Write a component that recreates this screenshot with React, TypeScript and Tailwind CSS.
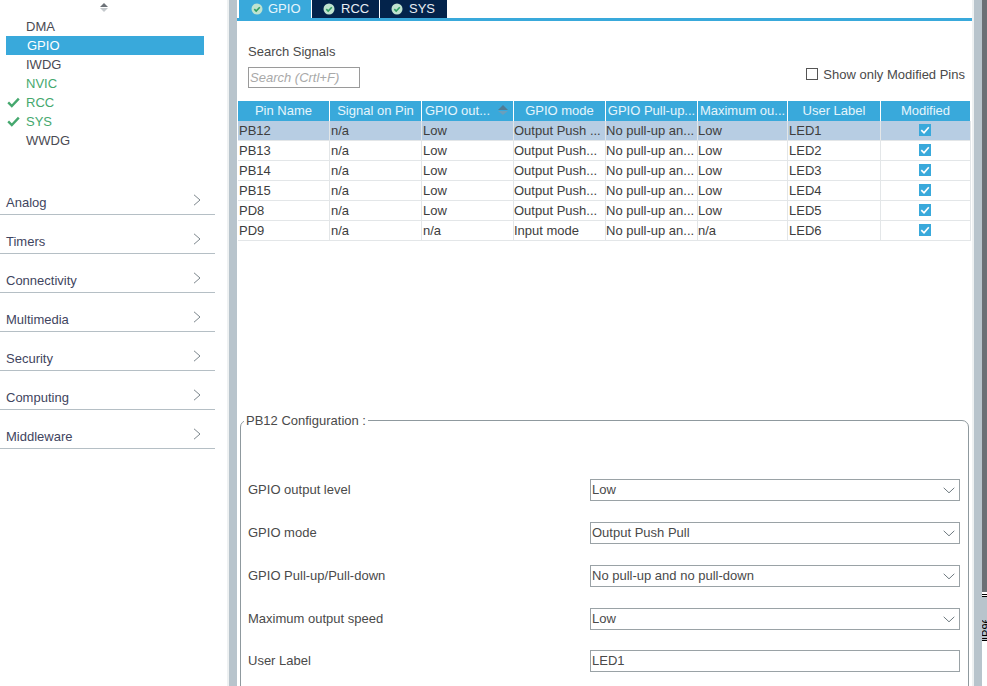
const font = "font-['Liberation_Sans',Arial,sans-serif]";

const gpioItems = [
  { name: "DMA", color: "text-[#4a4a52]" },
  { name: "GPIO", color: "text-white", selected: true },
  { name: "IWDG", color: "text-[#4a4a52]" },
  { name: "NVIC", color: "text-[#45a86e]" },
  { name: "RCC", color: "text-[#45a86e]", checked: true },
  { name: "SYS", color: "text-[#45a86e]", checked: true },
  { name: "WWDG", color: "text-[#4a4a52]" },
];

const categories = ["Analog", "Timers", "Connectivity", "Multimedia", "Security", "Computing", "Middleware"];

const columns = [
  { label: "Pin Name", width: "w-[92px]", pad: "pl-[1px]" },
  { label: "Signal on Pin", width: "w-[92px]", pad: "pl-[1px]" },
  { label: "GPIO out...", width: "w-[92px]", pad: "pl-[1px]", sorted: true },
  { label: "GPIO mode", width: "w-[92px]", pad: "pl-0" },
  { label: "GPIO Pull-up...", width: "w-[92px]", pad: "pl-0" },
  { label: "Maximum ou...", width: "w-[90px]", pad: "pl-0" },
  { label: "User Label", width: "w-[93px]", pad: "pl-[1px]" },
  { label: "Modified", width: "w-[90px]", pad: "pl-0" },
];

const rows = [
  ["PB12", "n/a", "Low", "Output Push ...", "No pull-up an...", "Low", "LED1"],
  ["PB13", "n/a", "Low", "Output Push...", "No pull-up an...", "Low", "LED2"],
  ["PB14", "n/a", "Low", "Output Push...", "No pull-up an...", "Low", "LED3"],
  ["PB15", "n/a", "Low", "Output Push...", "No pull-up an...", "Low", "LED4"],
  ["PD8", "n/a", "Low", "Output Push...", "No pull-up an...", "Low", "LED5"],
  ["PD9", "n/a", "n/a", "Input mode", "No pull-up an...", "n/a", "LED6"],
];

const configFields = [
  { label: "GPIO output level", value: "Low" },
  { label: "GPIO mode", value: "Output Push Pull" },
  { label: "GPIO Pull-up/Pull-down", value: "No pull-up and no pull-down" },
  { label: "Maximum output speed", value: "Low" },
  { label: "User Label", value: "LED1", input: true },
];

function TabIcon() {
  return (
    <svg width="12" height="12" viewBox="0 0 12 12">
      <circle cx="6" cy="6" r="5.5" fill="#bfe3cf" />
      <path d="M3.3 6.1 5.2 8 8.8 4.2" fill="none" stroke="#2f9e63" strokeWidth="1.6" />
    </svg>
  );
}

function Tab({ label, active }: { label: string; active?: boolean }) {
  return (
    <div className={`flex h-[18px] items-center border-r border-white ${active ? "w-[73px] bg-[#39a9db] pl-[12px]" : "w-[68px] bg-[#03234b] pl-[11px]"}`}>
      <TabIcon />
      <span className={`text-[13px] ${active ? "ml-[5px] text-[#e6f5fb]" : "ml-[6px] text-[#e8eef4]"}`}>{label}</span>
    </div>
  );
}

function ModifiedBox() {
  return (
    <svg width="12" height="12" viewBox="0 0 12 12">
      <rect width="12" height="12" fill="#39a9db" />
      <path d="M2.3 6.2 5 8.8 9.8 3.2" fill="none" stroke="#fff" strokeWidth="1.7" />
    </svg>
  );
}

function Chevron() {
  return (
    <svg width="12" height="7" viewBox="0 0 12 7">
      <path d="M.7.8 6 5.8 11.3.8" fill="none" stroke="#6f7a80" strokeWidth="1" />
    </svg>
  );
}

export default function App() {
  return (
    <div className={`flex h-[686px] w-[987px] overflow-hidden bg-white text-[13px] ${font}`}>
      {/* left category tree */}
      <aside className="flex w-[227px] shrink-0 flex-col bg-white">
        <div className="flex h-[17px] w-[208px] flex-col items-center pt-[3px]">
          <span className="h-0 w-0 border-x-[4px] border-b-[4px] border-x-transparent border-b-[#6d7278]" />
          <span className="mt-[1px] h-0 w-0 border-x-[4px] border-t-[4px] border-x-transparent border-t-[#c3c8cc]" />
        </div>
        <ul className="ml-[6px] w-[198px]">
          {gpioItems.map((item) => (
            <li key={item.name} className={`relative flex h-[19px] items-center ${item.selected ? "bg-[#39a9db] pl-[21px]" : "pl-[20px]"} ${item.color}`}>
              {item.checked && (
                <svg className="absolute left-[1px] top-[4px]" width="13" height="11" viewBox="0 0 13 11">
                  <path d="M1.2 5.4 4.8 9 11.8 1.6" fill="none" stroke="#45a86e" strokeWidth="2.4" />
                </svg>
              )}
              {item.name}
            </li>
          ))}
        </ul>
        <div className="mt-[42px]">
          {categories.map((name) => (
            <div key={name} className="mb-[16px] flex h-[23px] w-[215px] items-center justify-between border-b border-[#b5bfc5] pb-[1px] pl-[6px] pr-[14px] text-[#3f4560]">
              <span className="pt-[1px]">{name}</span>
              <svg width="8" height="12" viewBox="0 0 8 12" className="mb-[6px]">
                <path d="M1 .8 7 6 1 11.2" fill="none" stroke="#7c868c" strokeWidth="1" />
              </svg>
            </div>
          ))}
        </div>
      </aside>

      <div className="w-[2px] shrink-0 bg-[#eef1f2]" />
      <div className="w-[8px] shrink-0 bg-[#b8c4cc]" />

      {/* main panel */}
      <main className="flex w-[735px] shrink-0 flex-col bg-white text-[#4a4a4a]">
        <div className="flex border-b-[3px] border-[#39a9db] pl-[2px]">
          <Tab label="GPIO" active />
          <Tab label="RCC" />
          <Tab label="SYS" />
        </div>

        <div className="flex items-end justify-between pl-[11px] pr-[7px] pt-[23px]">
          <div>
            <div className="h-[15px] leading-[15px]">Search Signals</div>
            <div className="mt-[8px] flex h-[21px] w-[112px] items-center border border-[#9a9a9a] pl-[1px] text-[13px] italic text-[#a9a9a9]">
              Search (Crtl+F)
            </div>
          </div>
          <label className="mb-[4px] flex items-center">
            <span className="h-[12px] w-[12px] border border-[#555]" />
            <span className="ml-[5px]">Show only Modified Pins</span>
          </label>
        </div>

        <div className="ml-[1px] mt-[13px] w-[733px]">
          <div className="flex h-[20px]">
            {columns.map((col) => (
              <div key={col.label} className={`relative flex items-center border-r border-white bg-[#39a9db] text-[#e6f5fb] ${col.width} ${col.sorted ? "pl-[3px]" : "justify-center"}`}>
                <span className="whitespace-nowrap">{col.label}</span>
                {col.sorted && (
                  <span className="absolute right-[5px] top-[4px] flex flex-col items-center">
                    <span className="h-0 w-0 border-x-[5px] border-b-[5px] border-x-transparent border-b-[#4f7c96]" />
                    <span className="mt-[1px] h-0 w-0 border-x-[5px] border-t-[4px] border-x-transparent border-t-[#6a9fbc]" />
                  </span>
                )}
              </div>
            ))}
          </div>
          {rows.map((row, i) => (
            <div key={row[0]} className={`flex h-[20px] border-b border-[#e3e6e8] ${i === 0 ? "bg-[#b7cde3]" : "bg-white"}`}>
              {row.map((cell, j) => (
                <div key={j} className={`flex items-center overflow-hidden whitespace-nowrap border-r border-[#e3e6e8] text-[#3d3d3d] ${columns[j].pad} ${columns[j].width}`}>
                  {cell}
                </div>
              ))}
              <div className="flex w-[90px] items-center justify-center border-r border-[#e3e6e8] pb-[2px] pr-[2px]">
                <ModifiedBox />
              </div>
            </div>
          ))}
        </div>

        <fieldset className="ml-[3px] mt-[172px] h-[300px] w-[729px] shrink-0 rounded-[7px] border border-[#8f999e] pl-[7px] pr-[8px] pt-[51px]">
          <legend className="ml-[-4px] px-[2px] leading-[15px] text-[#4a4a4a]">PB12 Configuration :</legend>
          {configFields.map((f) => (
            <div key={f.label} className={`mb-[21px] flex h-[22px] items-center justify-between ${f.input ? "mt-[-1px]" : ""}`}>
              <span>{f.label}</span>
              <div className="flex h-[22px] w-[370px] items-center justify-between border border-[#9aa2a6] pl-[1px] pr-[4px] text-[#4a4a4a]">
                {f.value}
                {!f.input && <Chevron />}
              </div>
            </div>
          ))}
        </fieldset>
      </main>

      <div className="w-[2px] shrink-0 bg-[#eef1f2]" />
      <div className="w-[8px] shrink-0 bg-[#b8c4cc]" />

      {/* edge of the next panel */}
      <div className="flex w-[5px] shrink-0 flex-col overflow-hidden">
        <div className="h-[592px] bg-[#6b7075]" />
        <div className="mt-[2px] h-[1px] bg-black" />
        <div className="mt-[1px] h-[1px] bg-black" />
        <div className="h-[23px] bg-[#b8c4cc]" />
        <div className="h-[20px] rotate-180 overflow-hidden bg-[#b8c4cc] text-[11px] leading-[9px] text-black [writing-mode:vertical-rl]">IP96</div>
        <div className="h-[1px] bg-black" />
        <div className="flex-1 bg-white" />
      </div>
    </div>
  );
}
